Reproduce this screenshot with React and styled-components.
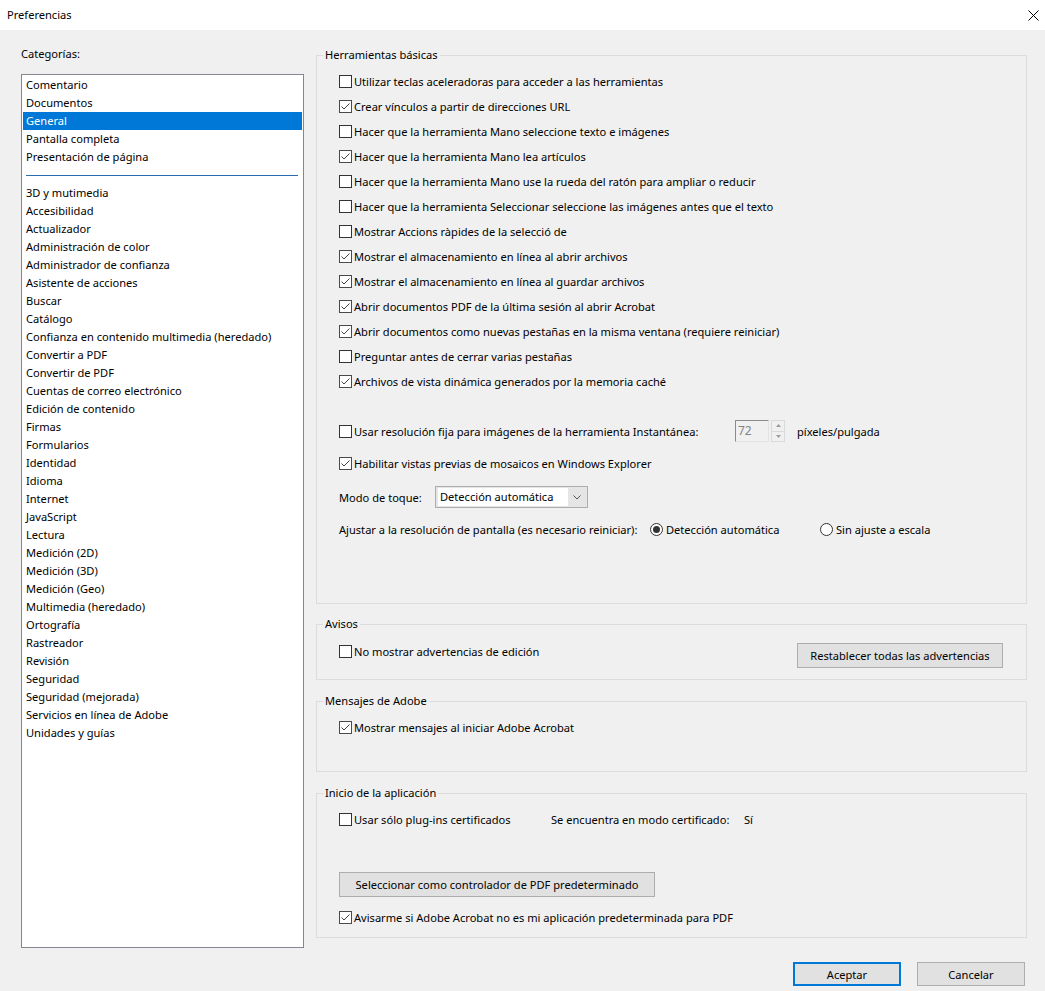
import React from 'react';
import styled, { createGlobalStyle } from 'styled-components';

const GlobalStyle = createGlobalStyle`
  html, body {
    margin: 0;
    padding: 0;
    background: #f0f0f0;
  }
  body {
    font-family: "Noto Sans", "Liberation Sans", sans-serif;
    font-size: 11.1px;
    color: #000;
  }
  * {
    box-sizing: border-box;
  }
`;

const Window = styled.div`
  width: 1045px;
  height: 991px;
  background: #f0f0f0;
  overflow: hidden;
`;

const TitleBar = styled.div`
  height: 30px;
  background: #fff;
  display: flex;
  align-items: center;
  justify-content: space-between;
  padding: 0 6px 0 7px;
`;

const Title = styled.span`
  line-height: 16px;
`;

const CloseButton = styled.div`
  width: 11px;
  height: 11px;
  display: flex;
`;

const Main = styled.div`
  display: grid;
  grid-template-columns: 283px 711px;
  column-gap: 12px;
  padding-left: 21px;
  height: 918px;
`;

const LeftColumn = styled.div`
  padding-top: 16px;
  display: flex;
  flex-direction: column;
`;

const CategoryLabel = styled.div`
  line-height: 16px;
  margin-bottom: 12px;
`;

const ListBox = styled.div`
  height: 874px;
  background: #fff;
  border: 1px solid #828790;
  padding: 1px;
`;

const ListItem = styled.div`
  height: 18px;
  line-height: 18px;
  padding-left: 3px;
  white-space: nowrap;
  background: ${p => (p.$selected ? '#0078d7' : 'transparent')};
  color: ${p => (p.$selected ? '#fff' : '#000')};
`;

const ListSeparator = styled.div`
  height: 18px;
  display: flex;
  align-items: center;
  padding: 0 4px 0 3px;

  &::after {
    content: '';
    flex: 1;
    height: 1px;
    background: #2b6cae;
  }
`;

const RightColumn = styled.div`
  padding-top: 17px;
  display: flex;
  flex-direction: column;
`;

const Group = styled.fieldset`
  margin: ${p => p.$mt || 0}px 0 0 0;
  padding: 0;
  min-width: 0;
  border: 1px solid #dcdcdc;
  height: ${p => p.$height}px;
`;

const Legend = styled.legend`
  margin-left: 6px;
  padding: 0 2px;
  line-height: 16px;
`;

const GroupBody = styled.div`
  padding: ${p => p.$top}px 23px 0 22px;
`;

const CheckRow = styled.div`
  height: ${p => p.$h || 25}px;
  display: flex;
  align-items: center;
  margin-top: ${p => p.$mt || 0}px;
`;

const Item = styled.label`
  display: flex;
  align-items: center;
  white-space: nowrap;
  width: ${p => (p.$w ? `${p.$w}px` : 'auto')};
  flex: none;
`;

const Box = styled.span`
  width: 13px;
  height: 13px;
  border: 1px solid ${p => (p.$checked ? '#4a4a4a' : '#333')};
  background: #fff;
  display: inline-flex;
  align-items: center;
  justify-content: center;
  margin-right: 2px;
  flex: none;
`;

const Radio = styled.span`
  width: 13px;
  height: 13px;
  border: 1px solid #333;
  border-radius: 50%;
  background: #fff;
  display: inline-flex;
  align-items: center;
  justify-content: center;
  margin-right: 3px;
  flex: none;

  &::after {
    content: '';
    width: 7px;
    height: 7px;
    border-radius: 50%;
    background: ${p => (p.$checked ? '#333' : 'transparent')};
  }
`;

const Text = styled.span`
  width: ${p => (p.$w ? `${p.$w}px` : 'auto')};
  flex: none;
  white-space: nowrap;
`;

const SpinWrap = styled.div`
  display: flex;
  align-items: center;
  gap: 2px;
  margin-right: 12px;
`;

const SpinInput = styled.div`
  width: 34px;
  height: 22px;
  border: 1px solid #e3e3e3;
  border-left-color: #8c8c8c;
  border-top-color: #8c8c8c;
  color: #838383;
  font-size: 12px;
  line-height: 20px;
  padding-left: 2px;
  background: #f0f0f0;
`;

const SpinButtons = styled.div`
  width: 14px;
  height: 22px;
  display: flex;
  flex-direction: column;
`;

const SpinButton = styled.div`
  flex: 1;
  border: 1px solid #dadada;
  margin-top: ${p => (p.$down ? '-1px' : '0')};
  display: flex;
  align-items: center;
  justify-content: center;
`;

const Select = styled.div`
  width: 153px;
  height: 22px;
  border: 1px solid #adadad;
  background: #e5e5e5;
  display: flex;
  align-items: center;
  padding: 1px 2px;
`;

const SelectValue = styled.div`
  width: 130px;
  height: 18px;
  background: #fff;
  line-height: 18px;
  padding-left: 2px;
`;

const SelectArrow = styled.div`
  flex: 1;
  display: flex;
  justify-content: center;
`;

const Row = styled.div`
  display: flex;
  align-items: ${p => p.$align || 'center'};
  justify-content: ${p => p.$justify || 'flex-start'};
  height: ${p => (p.$h ? `${p.$h}px` : 'auto')};
  margin-top: ${p => p.$mt || 0}px;
`;

const Button = styled.button`
  font-family: inherit;
  font-size: 11.1px;
  color: #000;
  height: ${p => p.$h || 25}px;
  width: ${p => p.$w}px;
  background: #e1e1e1;
  border: ${p => (p.$primary ? '2px solid #0078d7' : '1px solid #adadad')};
  padding: 0;
  margin: 0;
  flex: none;
`;

const Footer = styled.div`
  display: flex;
  justify-content: flex-end;
  gap: 16px;
  padding: 14px 20px 0 0;
`;

const CheckMark = () => (
  <svg width="11" height="11" viewBox="0 0 11 11">
    <path d="M1.5 5.5 L4 8 L9.5 2.5" fill="none" stroke="#444" strokeWidth="1" />
  </svg>
);

const Checkbox = ({ checked, label, width }) => (
  <Item $w={width}>
    <Box $checked={checked}>{checked && <CheckMark />}</Box>
    {label}
  </Item>
);

const RadioOption = ({ checked, label, width }) => (
  <Item $w={width}>
    <Radio $checked={checked} />
    {label}
  </Item>
);

const topCategories = ['Comentario', 'Documentos', 'General', 'Pantalla completa', 'Presentación de página'];

const otherCategories = [
  '3D y mutimedia',
  'Accesibilidad',
  'Actualizador',
  'Administración de color',
  'Administrador de confianza',
  'Asistente de acciones',
  'Buscar',
  'Catálogo',
  'Confianza en contenido multimedia (heredado)',
  'Convertir a PDF',
  'Convertir de PDF',
  'Cuentas de correo electrónico',
  'Edición de contenido',
  'Firmas',
  'Formularios',
  'Identidad',
  'Idioma',
  'Internet',
  'JavaScript',
  'Lectura',
  'Medición (2D)',
  'Medición (3D)',
  'Medición (Geo)',
  'Multimedia (heredado)',
  'Ortografía',
  'Rastreador',
  'Revisión',
  'Seguridad',
  'Seguridad (mejorada)',
  'Servicios en línea de Adobe',
  'Unidades y guías',
];

const basicTools = [
  ['Utilizar teclas aceleradoras para acceder a las herramientas', false],
  ['Crear vínculos a partir de direcciones URL', true],
  ['Hacer que la herramienta Mano seleccione texto e imágenes', false],
  ['Hacer que la herramienta Mano lea artículos', true],
  ['Hacer que la herramienta Mano use la rueda del ratón para ampliar o reducir', false],
  ['Hacer que la herramienta Seleccionar seleccione las imágenes antes que el texto', false],
  ['Mostrar Accions ràpides de la selecció de', false],
  ['Mostrar el almacenamiento en línea al abrir archivos', true],
  ['Mostrar el almacenamiento en línea al guardar archivos', true],
  ['Abrir documentos PDF de la última sesión al abrir Acrobat', true],
  ['Abrir documentos como nuevas pestañas en la misma ventana (requiere reiniciar)', true],
  ['Preguntar antes de cerrar varias pestañas', false],
  ['Archivos de vista dinámica generados por la memoria caché', true],
];

const App = () => (
  <Window>
    <GlobalStyle />
    <TitleBar>
      <Title>Preferencias</Title>
      <CloseButton>
        <svg width="11" height="11" viewBox="0 0 11 11">
          <path d="M0.5 0.5 L10.5 10.5 M10.5 0.5 L0.5 10.5" stroke="#000" strokeWidth="1" />
        </svg>
      </CloseButton>
    </TitleBar>

    <Main>
      <LeftColumn>
        <CategoryLabel>Categorías:</CategoryLabel>
        <ListBox>
          {topCategories.map(c => (
            <ListItem key={c} $selected={c === 'General'}>{c}</ListItem>
          ))}
          <ListSeparator />
          {otherCategories.map(c => (
            <ListItem key={c}>{c}</ListItem>
          ))}
        </ListBox>
      </LeftColumn>

      <RightColumn>
        <Group $height={557}>
          <Legend>Herramientas básicas</Legend>
          <GroupBody $top={6}>
            {basicTools.map(([label, checked]) => (
              <CheckRow key={label}>
                <Checkbox label={label} checked={checked} />
              </CheckRow>
            ))}

            <CheckRow $h={22} $mt={26}>
              <Checkbox width={396} label="Usar resolución fija para imágenes de la herramienta Instantánea:" />
              <SpinWrap>
                <SpinInput>72</SpinInput>
                <SpinButtons>
                  <SpinButton>
                    <svg width="5" height="3" viewBox="0 0 5 3"><path d="M0 3 L2.5 0 L5 3 Z" fill="#9a9a9a" /></svg>
                  </SpinButton>
                  <SpinButton $down>
                    <svg width="5" height="3" viewBox="0 0 5 3"><path d="M0 0 L2.5 3 L5 0 Z" fill="#9a9a9a" /></svg>
                  </SpinButton>
                </SpinButtons>
              </SpinWrap>
              <Text>píxeles/pulgada</Text>
            </CheckRow>

            <CheckRow $h={22} $mt={10}>
              <Checkbox checked label="Habilitar vistas previas de mosaicos en Windows Explorer" />
            </CheckRow>

            <Row $h={22} $mt={12}>
              <Text $w={96}>Modo de toque:</Text>
              <Select>
                <SelectValue>Detección automática</SelectValue>
                <SelectArrow>
                  <svg width="8" height="5" viewBox="0 0 8 5"><path d="M0.5 0.5 L4 4 L7.5 0.5" fill="none" stroke="#555" strokeWidth="1" /></svg>
                </SelectArrow>
              </Select>
            </Row>

            <Row $h={22} $mt={10}>
              <Text $w={311}>Ajustar a la resolución de pantalla (es necesario reiniciar):</Text>
              <RadioOption checked width={170} label="Detección automática" />
              <RadioOption label="Sin ajuste a escala" />
            </Row>
          </GroupBody>
        </Group>

        <Group $height={64} $mt={12}>
          <Legend>Avisos</Legend>
          <GroupBody $top={11}>
            <Row $align="flex-start" $justify="space-between">
              <CheckRow $h={14} $mt={1}>
                <Checkbox label="No mostrar advertencias de edición" />
              </CheckRow>
              <Button $w={206}>Restablecer todas las advertencias</Button>
            </Row>
          </GroupBody>
        </Group>

        <Group $height={79} $mt={13}>
          <Legend>Mensajes de Adobe</Legend>
          <GroupBody $top={11}>
            <CheckRow $h={14}>
              <Checkbox checked label="Mostrar mensajes al iniciar Adobe Acrobat" />
            </CheckRow>
          </GroupBody>
        </Group>

        <Group $height={153} $mt={13}>
          <Legend>Inicio de la aplicación</Legend>
          <GroupBody $top={11}>
            <CheckRow $h={14}>
              <Checkbox width={212} label="Usar sólo plug-ins certificados" />
              <Text $w={193}>Se encuentra en modo certificado:</Text>
              <Text>Sí</Text>
            </CheckRow>
            <Row $mt={46}>
              <Button $w={316}>Seleccionar como controlador de PDF predeterminado</Button>
            </Row>
            <CheckRow $h={14} $mt={13}>
              <Checkbox checked label="Avisarme si Adobe Acrobat no es mi aplicación predeterminada para PDF" />
            </CheckRow>
          </GroupBody>
        </Group>
      </RightColumn>
    </Main>

    <Footer>
      <Button $primary $w={108} $h={24}>Aceptar</Button>
      <Button $w={108} $h={24}>Cancelar</Button>
    </Footer>
  </Window>
);

export default App;
